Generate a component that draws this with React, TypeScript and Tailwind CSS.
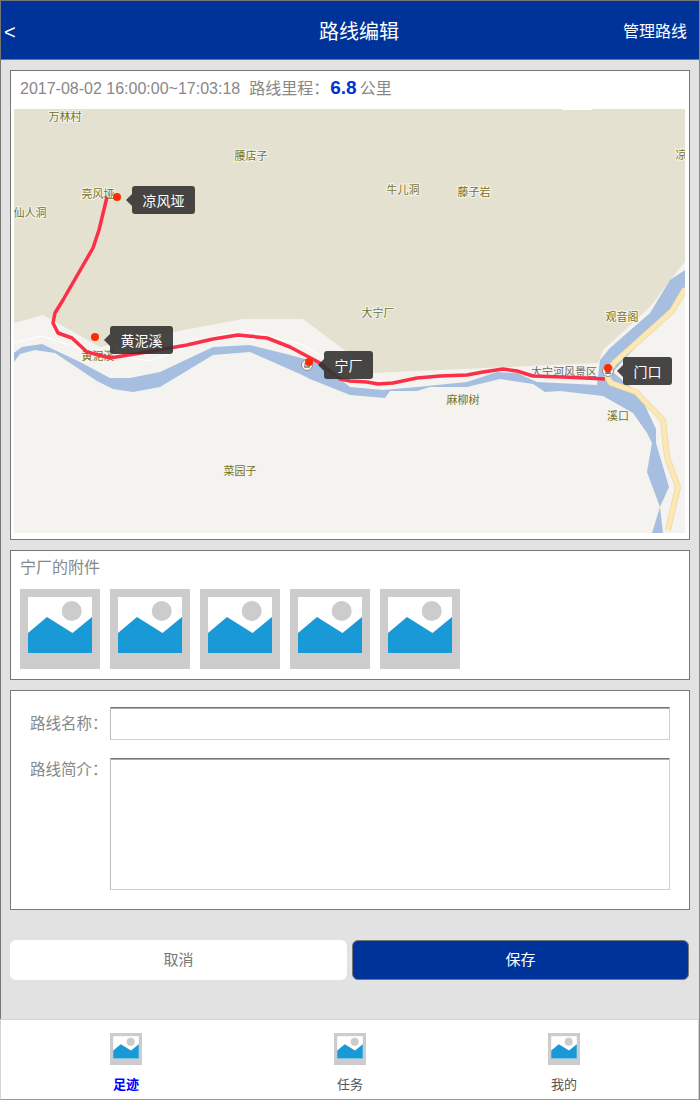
import React from "react";

const FONT = "font-['Liberation_Sans','Noto_Sans_CJK_SC',sans-serif]";

const mapLabels = [
  { text: "万林村", x: 65, y: 117 },
  { text: "腰店子", x: 251, y: 156 },
  { text: "亮风垭", x: 98, y: 194 },
  { text: "仙人洞", x: 30, y: 213 },
  { text: "牛儿洞", x: 403, y: 190 },
  { text: "藤子岩", x: 474, y: 192 },
  { text: "凉", x: 681, y: 155 },
  { text: "大宁厂", x: 378, y: 313 },
  { text: "观音阁", x: 622, y: 317 },
  { text: "麻柳树", x: 463, y: 400 },
  { text: "溪口", x: 618, y: 416 },
  { text: "菜园子", x: 240, y: 471 },
  { text: "黄泥溪", x: 98, y: 356 },
];

const markers = [
  { x: 117, y: 197 },
  { x: 95, y: 337 },
  { x: 309, y: 362 },
  { x: 608, y: 368 },
];

const Placeholder: React.FC<{ className: string }> = ({ className }) => (
  <svg viewBox="0 0 80 80" className={className}>
    <rect width="80" height="80" fill="#cccccc" />
    <rect x="8" y="8" width="64" height="56" fill="#ffffff" />
    <path d="M8 44L27 28L52.500 44L72 28V64H8Z" fill="#199ad6" />
    <circle cx="51.700" cy="22" r="10" fill="#cccccc" />
  </svg>
);

const Callout: React.FC<{ text: string; className: string }> = ({ text, className }) => (
  <div className={`absolute h-[28px] rounded-[3px] bg-[#333331]/90 pt-px text-center text-[14px] leading-[28px] text-white ${className}`}>
    <span className="absolute left-[-6px] top-[8px] h-0 w-0 border-y-[6px] border-r-[6px] border-y-transparent border-r-[#333331]/90"></span>
    {text}
  </div>
);

const RouteMap: React.FC = () => (
  <div className="relative ml-[3px] h-[424px] w-[671px] overflow-hidden bg-[#f4f3ef]">
    <svg viewBox="14 109 671 424" className="block h-[424px] w-[671px]">
      {/* land */}
      <path
        d="M14 323L43 315L100 347L173 332L243 319L303 319L347 352L372 373L598 363L603 350L650 307L678 270L685 262V109H14Z"
        fill="#e4e1d0"
      />
      {/* thin white road */}
      <path
        d="M14 343L42 336L90 352L150 361L213 337L243 330L303 345L340 368"
        fill="none"
        stroke="#ffffff"
        strokeWidth="1"
      />
      {/* river */}
      <path
        d="M14 352.700L22 347L42 344L80 362L110 378L130 378L160 372L213 347L250 345L290 355L320 363L350 387L383 390L417 387L467 382L497 372L517 373L537 382L597 385L600 360L610 348L650 313L670 280L685 270V287L672 307L613 372L640 395L656 429L656 443L669 487L660 507L663 533H652L660 507L647 472L652 443L647 433L633 413L603 396L560 391L545 392L533 384L500 379L467 387L430 387L417 391L390 391L385 398L350 395L310 379L300 374L250 352L213 355L160 387L133 392L113 389L97 381L55 353L35 350L20 354L14 362Z"
        fill="#a6bfe0"
      />
      {/* main road */}
      <path
        d="M685 289L672 311L614 363L607 377L611 383L636 392L663 420L667 457L678 487L668 530"
        fill="none"
        stroke="#e8d9a8"
        strokeWidth="6"
      />
      <path
        d="M685 289L672 311L614 363L607 377L611 383L636 392L663 420L667 457L678 487L668 530"
        fill="none"
        stroke="#fde8b4"
        strokeWidth="4.500"
      />
      <rect x="562" y="109" width="30" height="1" fill="#ffffff" />
      {mapLabels.map((label) => (
        <text
          key={label.text}
          x={label.x}
          y={label.y + 4}
          textAnchor="middle"
          className="fill-[#74741f] stroke-[#f4f3ef] stroke-2 text-[11px] [paint-order:stroke]"
        >
          {label.text}
        </text>
      ))}
      <text
        x="564"
        y="376"
        textAnchor="middle"
        className="fill-[#6b6b6b] stroke-[#f4f3ef] stroke-2 text-[11px] [paint-order:stroke]"
      >
        大宁河风景区
      </text>
      {/* scenic spot icons */}
      <circle cx="307" cy="365" r="5.500" fill="#f4f3ef" stroke="#8d8d8d" />
      <path d="M304 367h6M305 363h4v4h-4Z" fill="none" stroke="#777777" />
      <circle cx="608" cy="371" r="5.500" fill="#f4f3ef" stroke="#8d8d8d" />
      <path d="M605 373.500h6M606 368.500h4v5h-4Z" fill="#777777" stroke="#777777" />
      {/* route */}
      <path
        d="M107 197L99 230L93 248L63 300L55 313L53 323L58 333L72 338L87 352L110 358L147 352L187 345L213 339L238 335L267 338L290 347L320 363L340 379L350 381L367 382L378 384L393 383L417 378L440 376L467 375L483 372L503 369L517 371L533 376L563 377L605 379"
        fill="none"
        stroke="#fb3048"
        strokeWidth="3.500"
        strokeLinejoin="round"
      />
      {markers.map((m) => (
        <circle key={m.x} cx={m.x} cy={m.y} r="4" fill="#ff2a00" />
      ))}
    </svg>
    <Callout text="凉风垭" className="left-[118px] top-[77px] w-[63px]" />
    <Callout text="黄泥溪" className="left-[96px] top-[217px] w-[63px]" />
    <Callout text="宁厂" className="left-[310px] top-[242px] w-[49px]" />
    <Callout text="门口" className="left-[609px] top-[248px] w-[49px]" />
  </div>
);

const tabs = [
  { label: "足迹", width: "w-[250px]", active: true },
  { label: "任务", width: "w-[198px]", active: false },
  { label: "我的", width: "w-[230px]", active: false },
];

export default function App() {
  return (
    <div className={`flex h-[1100px] w-[700px] flex-col border-r border-r-[#888888] ${FONT}`}>
      {/* header */}
      <header className="flex h-[60px] shrink-0 items-center border-y border-l border-y-[#777777] border-l-[#777777] bg-[#003399] pt-[3px] text-white">
        <div className="w-[94px] pl-[3px] text-[20px] leading-none">&lt;</div>
        <h1 className="flex-1 text-center text-[20px] font-normal">路线编辑</h1>
        <div className="w-[76px] text-[16px]">管理路线</div>
      </header>

      {/* content */}
      <main className="flex flex-1 flex-col gap-[10px] border-l border-l-[#777777] bg-[#e2e2e2] pl-[9px] pr-[9px] pt-[10px]">
        <section className="h-[470px] border border-[#777777] bg-white">
          <div className="flex h-[38px] items-center pb-[3px] pl-[9px] text-[16px] text-[#888888]">
            <span>2017-08-02 16:00:00~17:03:18</span>
            <span className="ml-[9px]">路线里程：</span>
            <span className="ml-px text-[19px] font-bold text-[#0033cc]">6.8</span>
            <span className="ml-[3px]">公里</span>
          </div>
          <RouteMap />
        </section>

        <section className="h-[130px] border border-[#777777] bg-white pl-[9px]">
          <div className="h-[38px] pt-[9px] text-[16px] leading-none text-[#888888]">宁厂的附件</div>
          <div className="flex gap-[10px]">
            {[0, 1, 2, 3, 4].map((i) => (
              <Placeholder key={i} className="block h-[80px] w-[80px]" />
            ))}
          </div>
        </section>

        <section className="h-[220px] border border-[#777777] bg-white pl-[19px] pt-[16px]">
          <div className="flex h-[33px] items-center">
            <label className="w-[80px] text-[15.500px] text-[#888888]">路线名称：</label>
            <input className="h-[33px] w-[560px] border border-[#d0d0d0] border-l-[#bbbbbb] border-t-[#777777] bg-white shadow-[inset_0_1px_0_#aaaaaa] outline-none" />
          </div>
          <div className="mt-[18px] flex">
            <label className="w-[80px] text-[15.500px] text-[#888888]">路线简介：</label>
            <textarea className="block h-[132px] w-[560px] resize-none border border-[#d0d0d0] border-l-[#bbbbbb] border-t-[#777777] bg-white shadow-[inset_0_1px_0_#aaaaaa] outline-none"></textarea>
          </div>
        </section>

        <div className="mt-[20px] flex gap-[5px]">
          <button className="h-[40px] w-[337px] rounded-[6px] bg-white pt-px text-[15px] text-[#777777]">取消</button>
          <button className="h-[40px] w-[337px] rounded-[6px] border border-[#777777] bg-[#003399] pt-px text-[15px] text-white">保存</button>
        </div>
      </main>

      {/* tab bar */}
      <nav className="flex h-[81px] shrink-0 border-x border-b border-t border-x-[#d4d4d4] border-b-[#999999] border-t-[#d4d4d4] bg-white">
        {tabs.map((tab) => (
          <div key={tab.label} className={`flex flex-col items-center pt-[13px] ${tab.width}`}>
            <Placeholder className="block h-[32px] w-[32px]" />
            <span className={`mt-[12px] text-[13px] leading-[16px] ${tab.active ? "font-bold text-[#0000ff]" : "text-[#555555]"}`}>
              {tab.label}
            </span>
          </div>
        ))}
      </nav>
    </div>
  );
}
